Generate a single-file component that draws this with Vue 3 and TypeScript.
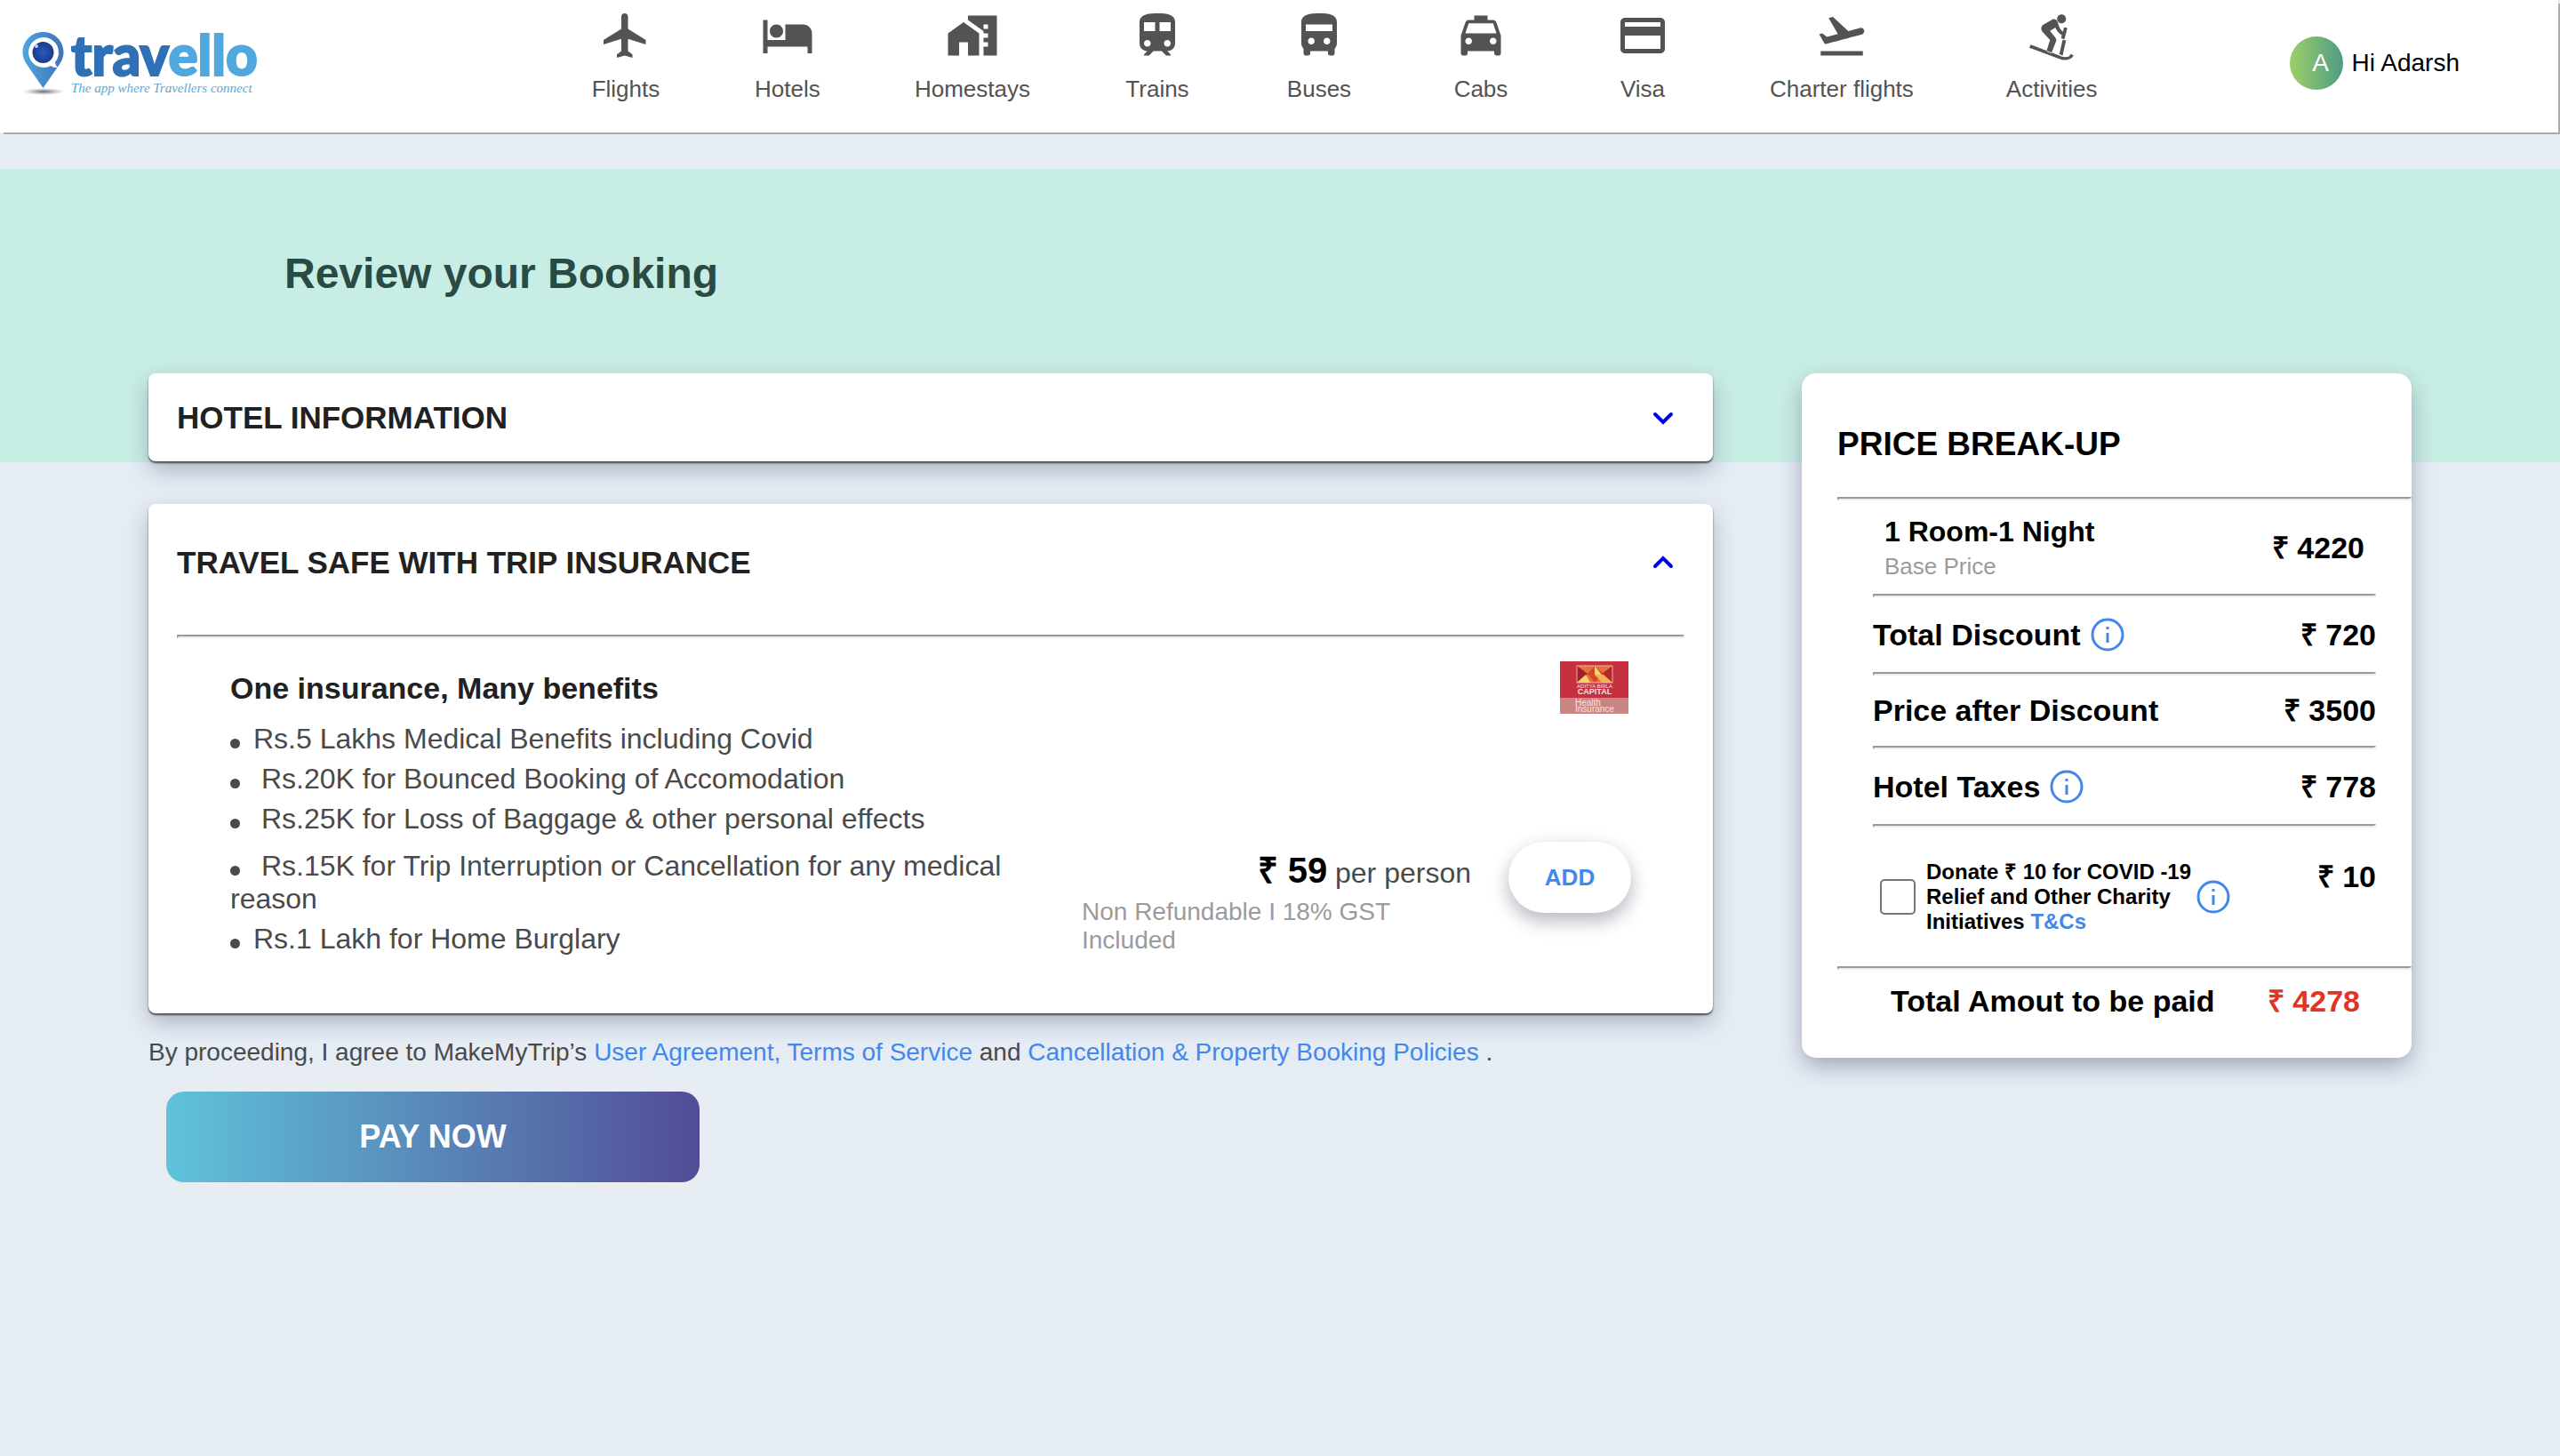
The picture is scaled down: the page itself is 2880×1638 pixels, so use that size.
<script setup lang="ts">
import { ref } from 'vue'

interface NavItem {
  label: string
  icon: string
}

interface PriceRow {
  label: string
  amount: string
  info: boolean
}

const navItems: NavItem[] = [
  {
    label: 'Flights',
    icon: 'M21 16v-2l-8-5V3.5c0-.83-.67-1.5-1.5-1.5S10 2.67 10 3.5V9l-8 5v2l8-2.5V19l-2 1.5V22l3.5-1 3.5 1v-1.5L13 19v-5.5l8 2.5z',
  },
  {
    label: 'Hotels',
    icon: 'M7 13c1.66 0 3-1.34 3-3S8.66 7 7 7s-3 1.34-3 3 1.34 3 3 3zm12-6h-8v7H3V5H1v15h2v-3h18v3h2v-9c0-2.21-1.79-4-4-4z',
  },
  {
    label: 'Homestays',
    icon: 'M1 11v10h5v-6h4v6h5V11L8 6l-7 5zM10 3v1.97l7 5V11h2v2h-2v2h2v2h-2v4h6V3H10zm9 6h-2V7h2v2z',
  },
  {
    label: 'Trains',
    icon: 'M12 2c-4 0-8 .5-8 4v9.5C4 17.43 5.57 19 7.5 19L6 20.5v.5h2.23l2-2H14l2 2h2v-.5L16.5 19c1.93 0 3.5-1.57 3.5-3.5V6c0-3.5-3.58-4-8-4zM7.5 17c-.83 0-1.5-.67-1.5-1.5S6.67 14 7.5 14s1.5.67 1.5 1.5S8.33 17 7.5 17zm3.5-7H6V6h5v4zm2 0V6h5v4h-5zm3.5 7c-.83 0-1.5-.67-1.5-1.5s.67-1.5 1.5-1.5 1.5.67 1.5 1.5-.67 1.5-1.5 1.5z',
  },
  {
    label: 'Buses',
    icon: 'M12 2C8 2 4 2.5 4 6v9.5c0 .95.38 1.81 1 2.44V20c0 .55.45 1 1 1h1c.55 0 1-.45 1-1v-1h8v1c0 .55.45 1 1 1h1c.55 0 1-.45 1-1v-2.06c.62-.63 1-1.49 1-2.44V6c0-3.5-3.58-4-8-4zM8.5 16c-.83 0-1.5-.67-1.5-1.5S7.67 13 8.5 13s1.5.67 1.5 1.5S9.33 16 8.5 16zm7 0c-.83 0-1.5-.67-1.5-1.5s.67-1.5 1.5-1.5 1.5.67 1.5 1.5-.67 1.5-1.5 1.5zm2.5-6H6V7h12v3z',
  },
  {
    label: 'Cabs',
    icon: 'M18.92 6.01C18.72 5.42 18.16 5 17.5 5H15V3H9v2H6.5c-.66 0-1.21.42-1.42 1.01L3 12v8c0 .55.45 1 1 1h1c.55 0 1-.45 1-1v-1h12v1c0 .55.45 1 1 1h1c.55 0 1-.45 1-1v-8l-2.08-5.99zM6.5 16c-.83 0-1.5-.67-1.5-1.5S5.67 13 6.5 13s1.5.67 1.5 1.5S7.33 16 6.5 16zm11 0c-.83 0-1.5-.67-1.5-1.5s.67-1.5 1.5-1.5 1.5.67 1.5 1.5-.67 1.5-1.5 1.5zM5 11l1.5-4.5h11L19 11H5z',
  },
  {
    label: 'Visa',
    icon: 'M20 4H4c-1.11 0-1.99.89-1.99 2L2 18c0 1.11.89 2 2 2h16c1.11 0 2-.89 2-2V6c0-1.11-.89-2-2-2zm0 14H4v-6h16v6zm0-10H4V6h16v2z',
  },
  {
    label: 'Charter flights',
    icon: 'M2.5 19h19v2h-19zm19.57-9.36c-.21-.8-1.04-1.28-1.84-1.06L14.92 10l-6.9-6.43-1.93.51 4.14 7.17-4.97 1.33-1.97-1.54-1.45.39 2.59 4.49s7.12-1.9 16.57-4.43c.81-.23 1.28-1.05 1.07-1.85z',
  },
  {
    label: 'Activities',
    icon: 'M18.5 4.5c0 1.1-.9 2-2 2s-2-.9-2-2 .9-2 2-2 2 .9 2 2zM2.6 16.1l12.9 4.9 .9.35c1.2.42 2.5.5 3.6-.1l.5-.95 1.4.6c-.3.7-.9 1.3-1.6 1.6-1.5.7-3.2.6-4.8 0L2 17.5zM9.7 19.1l1.6-5.1-3.3-3.6c-1-1.1-.8-2.5.3-3.3l4-2.3c1-.5 2 0 2.4 1l.5 1.6c.3 1 1 2.2 1.9 2.9l.5-2 1.5.3-1.3 5.1-1.5-.5.3-1.4c-1.4-.8-2.3-2-2.9-3.4l-2.4 1.5 2.6 3.3c.2.4.3.8.2 1.2l-2.2 5.6zM17 13.9l1.5.3-1.5 6.8-1.5-.6z',
  },
]

const benefits: { text: string; spaced: boolean; long: boolean }[] = [
  { text: 'Rs.5 Lakhs Medical Benefits including Covid', spaced: false, long: false },
  { text: 'Rs.20K for Bounced Booking of Accomodation', spaced: true, long: false },
  { text: 'Rs.25K for Loss of Baggage & other personal effects', spaced: true, long: false },
  { text: 'Rs.15K for Trip Interruption or Cancellation for any medical reason', spaced: true, long: true },
  { text: 'Rs.1 Lakh for Home Burglary', spaced: false, long: false },
]

const priceRows: PriceRow[] = [
  { label: 'Total Discount', amount: '₹ 720', info: true },
  { label: 'Price after Discount', amount: '₹ 3500', info: false },
  { label: 'Hotel Taxes', amount: '₹ 778', info: true },
]

const hotelOpen = ref(false)
const insuranceOpen = ref(true)
const donate = ref(false)
</script>

<template>
  <div class="page">
    <header class="topbar">
      <a class="logo" href="#">
        <svg width="58" height="84" viewBox="0 0 58 84">
          <defs>
            <linearGradient id="pin" x1="0" y1="0" x2="1" y2="0">
              <stop offset="0" stop-color="#4fa6dc" />
              <stop offset="1" stop-color="#4372b8" />
            </linearGradient>
            <radialGradient id="lens">
              <stop offset="0" stop-color="#2c58b4" />
              <stop offset="1" stop-color="#183c8c" />
            </radialGradient>
            <radialGradient id="ground">
              <stop offset="0" stop-color="#555" stop-opacity="0.9" />
              <stop offset="1" stop-color="#999" stop-opacity="0" />
            </radialGradient>
          </defs>
          <ellipse cx="29" cy="76" rx="24" ry="4" fill="url(#ground)" />
          <path d="M28.500 9C15.500 9 5.500 19 5.500 32c0 5 2 10 5 14l18 26 18-26c3-4 5-9 5-14C51.500 19 41.500 9 28.500 9z" fill="url(#pin)" />
          <path d="M28.500 15a17 17 0 1 0 8.500 32c3 2 5 2 8 2-2-2-3-4-3-6A17 17 0 0 0 28.500 15z" fill="#fff" />
          <circle cx="28.500" cy="32" r="12" fill="url(#lens)" />
          <circle cx="21" cy="25" r="2" fill="#b9d4f2" />
        </svg>
        <span class="brand">
          <span class="wordmark">trav<span class="light">ello</span></span>
          <span class="tagline">The app where Travellers connect</span>
        </span>
      </a>
      <nav class="nav">
        <a v-for="item in navItems" :key="item.label" class="nav-item" href="#">
          <svg width="60" height="60" viewBox="0 0 24 24" fill="currentColor" fill-rule="evenodd"><path :d="item.icon" /></svg>
          <span>{{ item.label }}</span>
        </a>
      </nav>
      <div class="user">
        <span class="avatar">A</span>
        <span>Hi Adarsh</span>
      </div>
    </header>

    <div class="banner">
      <h1>Review your Booking</h1>
    </div>

    <main class="content">
      <div class="details">
        <section class="panel">
          <h2>
            <button class="panel-head" type="button" :aria-expanded="hotelOpen" @click="hotelOpen = !hotelOpen">
              HOTEL INFORMATION
              <svg class="chevron" :class="{ up: hotelOpen }" width="48" height="48" viewBox="0 0 48 48"><path d="M15 20l9 9 9-9" /></svg>
            </button>
          </h2>
        </section>

        <section class="panel">
          <h2>
            <button class="panel-head tall" type="button" :aria-expanded="insuranceOpen" @click="insuranceOpen = !insuranceOpen">
              TRAVEL SAFE WITH TRIP INSURANCE
              <svg class="chevron" :class="{ up: insuranceOpen }" width="48" height="48" viewBox="0 0 48 48"><path d="M15 20l9 9 9-9" /></svg>
            </button>
          </h2>
          <div v-if="insuranceOpen" class="panel-body">
            <hr />
            <div class="insurance">
              <div class="benefits">
                <h3>One insurance, Many benefits</h3>
                <ul>
                  <li v-for="b in benefits" :key="b.text" :class="{ long: b.long }"><template v-if="b.spaced">&nbsp;</template>{{ b.text }}</li>
                </ul>
              </div>
              <div class="offer">
                <svg class="insurer" width="77" height="59" viewBox="0 0 77 59">
                  <rect width="77" height="59" fill="#c7303f" />
                  <rect y="41" width="77" height="18" fill="#c98582" />
                  <rect x="19" y="5" width="40" height="19" fill="#e2763c" />
                  <path d="M19 5l12 9-12 10z" fill="#a3202b" />
                  <path d="M59 5L47 14l12 10z" fill="#b02a2c" />
                  <path d="M39 5l10 9-10 10-8-10z" fill="#d9442f" />
                  <path d="M39 5v10l10 3zM19 24l10-9 5 9z" fill="#f8d36b" />
                  <path d="M47 24l-8-9h10l10 9z" fill="#f3b14f" />
                  <rect x="19" y="5" width="40" height="19" fill="none" stroke="#e8b0a0" />
                  <text x="39" y="30" font-size="6" text-anchor="middle">ADITYA BIRLA</text>
                  <text x="39" y="37" font-size="9" font-weight="700" text-anchor="middle">CAPITAL</text>
                  <text x="17" y="50" font-size="10">Health</text>
                  <text x="17" y="57" font-size="10">Insurance</text>
                </svg>
                <div class="offer-row">
                  <div class="offer-text">
                    <p class="offer-price"><strong>₹ 59</strong> per person</p>
                    <p class="offer-note">Non Refundable I 18% GST Included</p>
                  </div>
                  <button class="add" type="button">ADD</button>
                </div>
              </div>
            </div>
          </div>
        </section>

        <p class="terms">
          By proceeding, I agree to MakeMyTrip’s <a href="#">User Agreement, Terms of Service</a> and
          <a href="#">Cancellation &amp; Property Booking Policies</a> .
        </p>
        <button class="pay" type="button">PAY NOW</button>
      </div>

      <aside class="summary">
        <h2>PRICE BREAK-UP</h2>
        <hr />
        <div class="rows">
          <div class="row base">
            <div>
              <p class="room">1 Room-1 Night</p>
              <p class="base-note">Base Price</p>
            </div>
            <span>₹ 4220</span>
          </div>
          <template v-for="row in priceRows" :key="row.label">
            <hr />
            <div class="row">
              <span class="row-label">
                {{ row.label }}
                <svg v-if="row.info" class="info" width="44" height="44" viewBox="0 0 44 44">
                  <circle cx="22" cy="22" r="17" />
                  <path d="M22 20v11" />
                  <path d="M22 13v3" />
                </svg>
              </span>
              <span>{{ row.amount }}</span>
            </div>
          </template>
          <hr />
          <div class="row donate">
            <div class="donate-main">
              <input id="donate" v-model="donate" type="checkbox" />
              <label for="donate">Donate ₹ 10 for COVID -19 Relief and Other Charity Initiatives <a href="#">T&amp;Cs</a></label>
              <svg class="info" width="44" height="44" viewBox="0 0 44 44">
                <circle cx="22" cy="22" r="17" />
                <path d="M22 20v11" />
                <path d="M22 13v3" />
              </svg>
            </div>
            <span>₹ 10</span>
          </div>
        </div>
        <hr />
        <div class="rows">
          <div class="row total">
            <span>Total Amout to be paid</span>
            <span class="total-amount">₹ 4278</span>
          </div>
        </div>
      </aside>
    </main>
  </div>
</template>

<style>
body {
  background: #e5ecf4;
}
</style>

<style scoped>
.page {
  font-family: "Liberation Sans", Arial, Helvetica, sans-serif;
  color: #000;
  padding-bottom: 80px;
}

.page * {
  box-sizing: border-box;
}

h1, h2, h3, p, ul {
  margin: 0;
  padding: 0;
}

a {
  color: #4287ec;
  text-decoration: none;
}

button {
  font-family: inherit;
  border: 0;
  cursor: pointer;
}

hr {
  margin: 0;
  border: 2px solid;
  border-color: #999 #eee #eee #999;
}

svg {
  display: block;
  flex: none;
}

/* Top bar */
.topbar {
  display: flex;
  align-items: flex-start;
  height: 149px;
  margin-right: 2px;
  background: #fff;
  box-shadow: 3px 3px 0 -1px #aaa;
}

.logo {
  display: flex;
  flex: 0 0 23%;
  gap: 2px;
  padding: 27px 0 0 20px;
}

.brand {
  display: flex;
  flex-direction: column;
  padding-top: 4px;
}

.wordmark {
  color: #2f70b6;
  font-family: Lato, "Open Sans", sans-serif;
  font-size: 62px;
  font-weight: 900;
  line-height: 60px;
  -webkit-text-stroke: 2px #2f70b6;
}

.wordmark .light {
  color: #50a8de;
  -webkit-text-stroke: 2px #50a8de;
}

.tagline {
  color: #58a9da;
  font-family: "Liberation Serif", "Times New Roman", serif;
  font-size: 15px;
  font-style: italic;
  line-height: 16px;
}

.nav {
  display: flex;
  gap: 104px;
  padding: 10px 0 0 3px;
}

.nav-item {
  display: flex;
  flex-direction: column;
  align-items: center;
  gap: 15px;
  min-width: 78px;
  color: #545252;
  font-size: 26px;
  line-height: 30px;
  white-space: nowrap;
}

.user {
  display: flex;
  align-items: center;
  gap: 10px;
  margin: 41px 111px 0 auto;
  font-size: 28px;
  line-height: 32px;
}

.avatar {
  width: 60px;
  height: 60px;
  padding-left: 10px;
  border-radius: 50%;
  background: linear-gradient(90deg, #9cd166, #4f9a87);
  color: #fff;
  line-height: 60px;
  text-align: center;
}

/* Title band */
.banner {
  height: 330px;
  margin-top: 41px;
  padding: 90px 0 0 320px;
  background: #c8ede4;
}

h1 {
  font-size: 48px;
  line-height: 56px;
  color: #2a4a44;
}

/* Page grid */
.content {
  display: grid;
  grid-template-columns: minmax(0, 1fr) 686px;
  align-items: start;
  gap: 100px;
  margin-top: -100px;
  padding: 0 167px;
}

.panel {
  margin-bottom: 48px;
  padding: 0 32px;
  border-radius: 8px;
  background: #fff;
  box-shadow: 0 2px 2px rgba(0, 0, 0, 0.6), 0 10px 26px -2px rgba(50, 50, 80, 0.35);
}

.panel + .panel {
  margin-bottom: 28px;
}

.panel-head {
  display: flex;
  align-items: center;
  justify-content: space-between;
  width: 100%;
  height: 99px;
  padding: 0;
  background: none;
  color: #212121;
  font-size: 35px;
  font-weight: 700;
  line-height: 38px;
}

.panel-head.tall {
  height: 131px;
}

.chevron path {
  fill: none;
  stroke: #0000e0;
  stroke-width: 4;
  stroke-linecap: round;
}

.chevron.up {
  transform: rotate(180deg);
}

.panel-body {
  padding: 16px 0 65px;
}

.insurance {
  display: grid;
  grid-template-columns: minmax(0, 1fr) 618px;
  gap: 42px;
  padding: 26px 60px 0;
}

.benefits h3 {
  margin: 10px 0 19px;
  color: #212121;
  font-size: 34px;
  line-height: 40px;
}

.benefits ul {
  display: flex;
  flex-direction: column;
  gap: 8px;
  list-style: none;
  color: #4a4a4a;
  font-size: 32px;
  line-height: 37px;
}

.benefits li::before {
  content: "";
  display: inline-block;
  width: 11px;
  height: 11px;
  margin-right: 15px;
  border-radius: 50%;
  background: currentColor;
}

.benefits .long {
  margin-top: 8px;
}

.offer {
  display: flex;
  flex-direction: column;
}

.insurer {
  align-self: flex-end;
  margin-right: 3px;
}

.insurer text {
  fill: #fbe3e0;
}

.offer-row {
  display: flex;
  justify-content: space-between;
  gap: 42px;
  margin-top: 144px;
}

.offer-text {
  flex: 1;
  padding-top: 12px;
}

.offer-price {
  color: #4a4a4a;
  font-size: 32px;
  line-height: 46px;
  text-align: right;
}

.offer-price strong {
  color: #000;
  font-size: 40px;
  line-height: 40px;
}

.offer-note {
  margin-top: 5px;
  color: #9b9b9b;
  font-size: 28px;
  line-height: 32px;
}

.add {
  flex: none;
  width: 138px;
  height: 80px;
  padding: 0;
  border-radius: 40px;
  background: #fff;
  box-shadow: 0 10px 20px rgba(50, 50, 80, 0.3), 0 2px 24px rgba(0, 0, 0, 0.05);
  color: #4287ec;
  font-size: 26px;
  font-weight: 700;
}

.terms {
  color: #4a4a4a;
  font-size: 28px;
  line-height: 32px;
}

.pay {
  display: block;
  width: 600px;
  height: 102px;
  margin: 28px 0 0 20px;
  border-radius: 20px;
  background: linear-gradient(90deg, #5fc3da, #524c97);
  box-shadow: 0 0 40px #eee;
  color: #fff;
  font-size: 36px;
  font-weight: 700;
}

/* Price summary */
.summary {
  padding: 59px 0 44px 40px;
  border-radius: 16px;
  background: #fff;
  box-shadow: 0 10px 26px -2px rgba(50, 50, 80, 0.4);
}

.summary h2 {
  margin-bottom: 38px;
  font-size: 37px;
  line-height: 42px;
}

.rows {
  padding: 0 40px;
}

.row {
  display: flex;
  align-items: center;
  justify-content: space-between;
  padding: 20px 0;
  font-size: 34px;
  font-weight: 700;
  line-height: 39px;
}

.row-label {
  display: flex;
  align-items: center;
  gap: 8px;
}

.info {
  fill: none;
  stroke: #4287ec;
  stroke-width: 3;
}

.base {
  padding: 17px 13px 16px;
}

.room {
  font-size: 32px;
  line-height: 36px;
}

.base-note {
  margin-top: 6px;
  color: #9b9b9b;
  font-size: 26px;
  font-weight: 400;
  line-height: 30px;
}

.donate {
  align-items: flex-start;
  padding: 36px 0;
}

.donate-main {
  display: flex;
  align-items: center;
}

.donate-main input {
  appearance: none;
  flex: none;
  width: 40px;
  height: 40px;
  margin: 0 12px 0 8px;
  border: 2px solid #767676;
  border-radius: 5px;
  background: #fff;
}

.donate-main input:checked {
  background: #4287ec;
}

.donate-main label {
  width: 301px;
  font-size: 24px;
  line-height: 28px;
}

.total {
  padding: 16px 18px 0 20px;
}

.total-amount {
  color: #e03424;
}
</style>
